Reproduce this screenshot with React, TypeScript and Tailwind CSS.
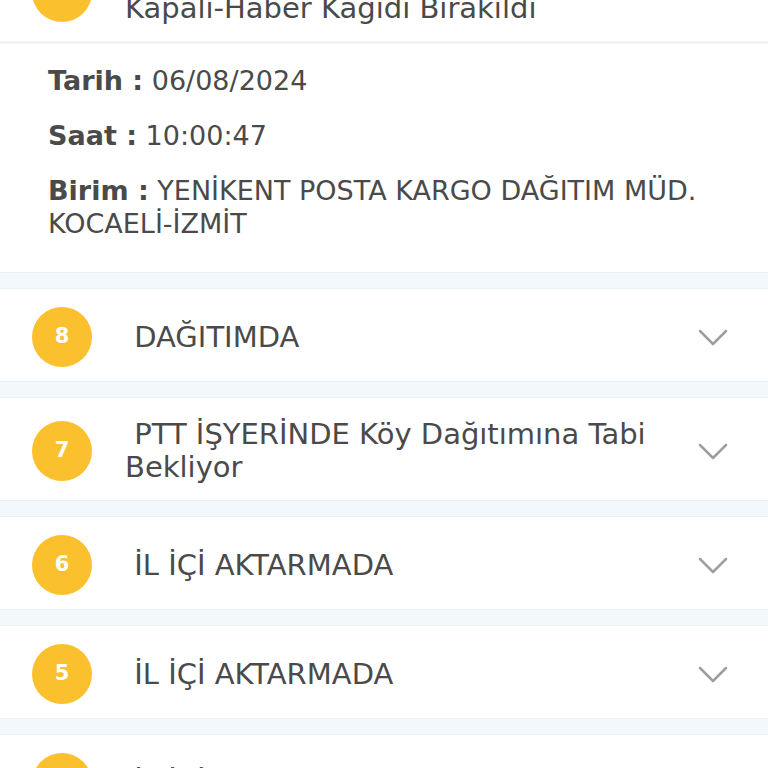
import React from 'react'

const steps = [
  { no: 8, title: ' DAĞITIMDA' },
  { no: 7, title: ' PTT İŞYERİNDE Köy Dağıtımına Tabi Bekliyor' },
  { no: 6, title: ' İL İÇİ AKTARMADA' },
  { no: 5, title: ' İL İÇİ AKTARMADA' },
  { no: 4, title: ' İL İÇİ AKTARMADA' },
]

function Chevron() {
  return (
    <svg width="30" height="17" viewBox="0 0 30 17" className="shrink-0">
      <polyline points="2,2 15,15 28,2" fill="none" stroke="#9e9e9e" strokeWidth="2.5" strokeLinecap="round" strokeLinejoin="round" />
    </svg>
  )
}

function Badge({ no }: { no: number }) {
  return (
    <div className="w-[60px] h-[60px] -my-[4px] shrink-0 rounded-full bg-[#fbc02d] flex items-center justify-center text-white text-[21px] font-bold font-['DejaVu_Sans',sans-serif]">
      {no}
    </div>
  )
}

function StepHeader({ no, title, open }: { no: number; title: string; open?: boolean }) {
  return (
    <div className="flex items-center min-h-[92px] pt-[20px] pb-[16px] pl-[32px] pr-[40px] bg-white">
      <Badge no={no} />
      <div className="flex-1 ml-[33px] pr-[30px] whitespace-pre-wrap text-[29px] leading-[33px] text-[#4a4a4a] font-['DejaVu_Sans',sans-serif]">
        {title}
      </div>
      {!open && <Chevron />}
    </div>
  )
}

function Gap() {
  return <div className="h-[17px] bg-[#f3f8fc] border-y border-[#e9f1f8]" />
}

export default function App() {
  return (
    <div className="w-[768px] h-[768px] overflow-hidden bg-white">
      <div className="-mt-[61px]">
        {/* open step, its header is cut off at the top */}
        <div className="bg-white">
          <StepHeader no={9} title={' Alıcı Adreste Bulunamadı\nKapalı-Haber Kağıdı Bırakıldı'} open />
          <div className="h-[3px] bg-[#f2f3f5]" />
          <div className="px-[48px] pt-[20px] pb-[32px] text-[27px] leading-[33px] text-[#4a4a4a] font-['DejaVu_Sans',sans-serif] flex flex-col gap-[22px]">
            <p><span className="font-bold">Tarih :</span> 06/08/2024</p>
            <p><span className="font-bold">Saat :</span> 10:00:47</p>
            <p><span className="font-bold">Birim :</span> YENİKENT POSTA KARGO DAĞITIM MÜD. KOCAELİ-İZMİT</p>
          </div>
        </div>
        {steps.map((s) => (
          <div key={s.no}>
            <Gap />
            <StepHeader no={s.no} title={s.title} />
          </div>
        ))}
      </div>
    </div>
  )
}
